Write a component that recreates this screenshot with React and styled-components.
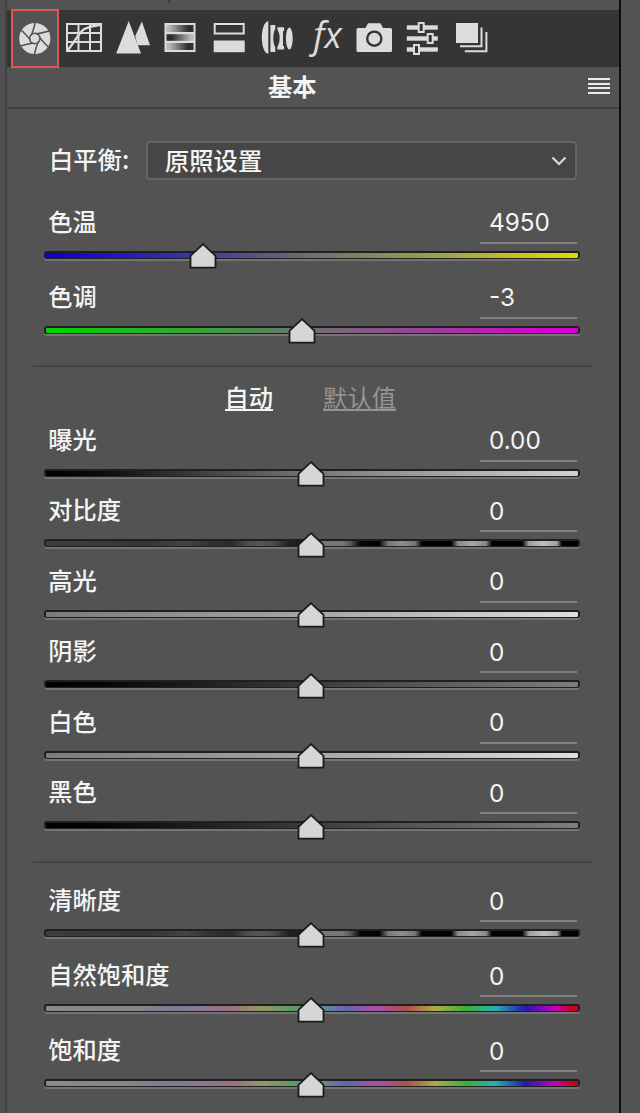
import { useState } from "react";
import styled, { createGlobalStyle } from "styled-components";

const GREY = "#dcdcdc";

const GRADIENTS = {
  temperature: "linear-gradient(90deg, #0d00cf 0%, #3333a8 26%, #6f6f70 50%, #a3a346 75%, #dede00 100%)",
  tint: "linear-gradient(90deg, #00d400 0%, #35a535 28%, #707070 50%, #a832a6 77%, #d600d2 95%)",
  exposure: "linear-gradient(90deg, #000 0%, #0b0b0b 10%, #777 50%, #d2d2d2 100%)",
  light: "linear-gradient(90deg, #7b7b7b 0%, #a5a5a5 50%, #dedede 100%)",
  dark: "linear-gradient(90deg, #000 0%, #050505 10%, #3c3c3c 50%, #7e7e7e 100%)",
  stripes: `linear-gradient(90deg, #3d3d3d 0, #393939 62px, #343434 100px, #3b3b3b 116px, #444 140px,
    #303030 166px, #2b2b2b 186px, #4a4a4a 200px, #575757 214px, #4a4a4a 228px, #222 242px, #1c1c1c 256px,
    #777 270px, #777 296px, #5b5b5b 304px, #080808 314px, #000 333px, #777 342px, #8e8e8e 356px,
    #777 369px, #000 376px, #000 405px, #8a8a8a 412px, #a5a5a5 426px, #8a8a8a 440px, #000 446px,
    #000 476px, #a0a0a0 483px, #c0c0c0 498px, #a0a0a0 511px, #000 516px, #000 100%)`,
  rainbow: `linear-gradient(90deg, #8a8a8a 0, #828888 85px, #7b7b93 125px, #8b7898 155px, #98707a 184px,
    #979763 216px, #5c9a64 245px, #5c8f99 276px, #6464ab 300px, #ab4ea6 331px, #aa5050 360px,
    #aeab45 389px, #37b237 421px, #27b2b1 449px, #2418b8 479px, #c800b9 509px, #c90014 528px, #c90014 100%)`,
};

const TOOLS = [
  { id: "basic", icon: <ApertureIcon /> },
  { id: "curve", icon: <CurveIcon /> },
  { id: "detail", icon: <DetailIcon /> },
  { id: "hsl", icon: <HslIcon /> },
  { id: "split", icon: <SplitIcon /> },
  { id: "lens", icon: <LensIcon /> },
  { id: "effects", icon: <FxIcon /> },
  { id: "camera", icon: <CameraIcon /> },
  { id: "presets", icon: <PresetsIcon /> },
  { id: "snapshots", icon: <SnapshotsIcon /> },
];

const COLOR_SLIDERS = [
  { label: "色温", value: "4950", position: 29.7, track: "temperature" },
  { label: "色调", value: "-3", position: 48.3, track: "tint" },
];

const TONE_SLIDERS = [
  { label: "曝光", value: "0.00", position: 50, track: "exposure" },
  { label: "对比度", value: "0", position: 50, track: "stripes" },
  { label: "高光", value: "0", position: 50, track: "light" },
  { label: "阴影", value: "0", position: 50, track: "dark" },
  { label: "白色", value: "0", position: 50, track: "light" },
  { label: "黑色", value: "0", position: 50, track: "dark" },
];

const PRESENCE_SLIDERS = [
  { label: "清晰度", value: "0", position: 50, track: "stripes" },
  { label: "自然饱和度", value: "0", position: 50, track: "rainbow" },
  { label: "饱和度", value: "0", position: 50, track: "rainbow" },
];

function ApertureIcon() {
  const blades = [0, 60, 120, 180, 240, 300];
  return (
    <Icon>
      <circle cx="23.8" cy="28.5" r="15.6" fill={GREY} />
      <g fill="none" stroke="#535353" strokeWidth="1.5">
        <circle cx="23.8" cy="28.5" r="5.2" />
        {blades.map((angle) => (
          <path
            key={angle}
            d="M20.4 25.2Q22.9 18.5 24.3 12.5"
            transform={`rotate(${angle} 23.8 28.5)`}
          />
        ))}
      </g>
    </Icon>
  );
}

function CurveIcon() {
  return (
    <Icon fill="none" stroke={GREY}>
      <path d="M7 14H41V41H7Z M18.5 14V41 M30 14V41 M7 23H41 M7 32H41" strokeWidth="2" />
      <path d="M7 41C14 33 17 26 22 21C26 16.5 32 17 41 14.5" strokeWidth="2.4" />
    </Icon>
  );
}

function DetailIcon() {
  return (
    <Icon fill={GREY}>
      <path d="M20.7 11L33 43.5H8.2Z" />
      <path d="M33.9 11.5L42 35.2H29.5L27.2 26Z" />
    </Icon>
  );
}

function HslIcon() {
  return (
    <Icon>
      <defs>
        <linearGradient id="fade-out">
          <stop offset="0.1" stopColor="#b9b9b9" />
          <stop offset="0.8" stopColor="#303030" />
        </linearGradient>
        <linearGradient id="fade-in">
          <stop offset="0.2" stopColor="#303030" />
          <stop offset="0.9" stopColor="#b9b9b9" />
        </linearGradient>
      </defs>
      <rect x="8.5" y="13" width="31" height="29" fill={GREY} />
      <rect x="10.5" y="15" width="27" height="7" fill="url(#fade-out)" />
      <rect x="10.5" y="24.2" width="27" height="6.6" fill="url(#fade-in)" />
      <rect x="10.5" y="33" width="27" height="7" fill="url(#fade-out)" />
    </Icon>
  );
}

function SplitIcon() {
  return (
    <Icon>
      <rect x="9.7" y="14" width="29" height="9.5" fill="none" stroke={GREY} strokeWidth="2" />
      <rect x="8.7" y="30.5" width="31" height="11.7" fill={GREY} />
    </Icon>
  );
}

function LensIcon() {
  return (
    <Icon fill={GREY}>
      <path d="M15.3 11V44C11 43 8.8 35.5 8.8 27.5S11 12 15.3 11Z" />
      <path d="M17.4 15H22.3V18.5C19.6 24 19.6 32 22.3 37.5V42H17.4Z" />
      <path d="M24.4 17.3H31.1V21H30V36H31.1V39.6H24.4V37C27.4 31.5 27.4 24.5 24.4 19.5Z" />
      <ellipse cx="36.3" cy="28.5" rx="3.4" ry="10.9" />
    </Icon>
  );
}

function FxIcon() {
  return <FxText>fx</FxText>;
}

function CameraIcon() {
  return (
    <Icon>
      <path
        d="M8 18H15.5L18 13.3H30.5L33 18H40.5Q42 18 42 19.5V40.5Q42 42 40.5 42H8Q6.5 42 6.5 40.5V19.5Q6.5 18 8 18Z"
        fill={GREY}
      />
      <circle cx="24.3" cy="28.7" r="7.1" fill="none" stroke="#353535" strokeWidth="2.4" />
    </Icon>
  );
}

function PresetsIcon() {
  const rows = [
    { y: 17.5, x: 23.2 },
    { y: 28.5, x: 32.2 },
    { y: 39.5, x: 18.5 },
  ];
  return (
    <Icon>
      {rows.map(({ x, y }) => (
        <g key={y}>
          <rect x="8.8" y={y - 2.2} width="31" height="4.4" fill={GREY} />
          <rect x={x - 2.5} y={y - 4.5} width="5" height="9" fill="#353535" stroke={GREY} strokeWidth="2" />
        </g>
      ))}
    </Icon>
  );
}

function SnapshotsIcon() {
  return (
    <Icon>
      <rect x="9" y="13" width="22" height="20" fill={GREY} />
      <path d="M13 36.3H34.5V17.5 M17.8 41.2H39.4V22" fill="none" stroke={GREY} strokeWidth="2" />
    </Icon>
  );
}

function Slider({ label, value, position, track }) {
  return (
    <SliderBlock>
      <SliderHead>
        <Label>{label}</Label>
        <Value>{value}</Value>
      </SliderHead>
      <Track $fill={GRADIENTS[track]}>
        <Thumb style={{ left: `${position}%` }} viewBox="0 0 28 26">
          <path d="M14 1.2L26.5 12.8V24.6H1.5V12.8Z" />
        </Thumb>
      </Track>
    </SliderBlock>
  );
}

function SliderGroup({ sliders, pitch }) {
  return (
    <Group $pitch={pitch}>
      {sliders.map((slider) => (
        <Slider key={slider.label} {...slider} />
      ))}
    </Group>
  );
}

function App() {
  const [active, setActive] = useState("basic");

  return (
    <Window>
      <GlobalStyle />
      <LeftEdge />
      <Panel>
        <TopStrip>
          <Tick />
        </TopStrip>
        <Toolbar>
          {TOOLS.map(({ id, icon }) => (
            <Tool key={id} $active={id === active} onClick={() => setActive(id)}>
              {icon}
            </Tool>
          ))}
        </Toolbar>
        <TitleBar>
          <Title>基本</Title>
          <MenuButton>
            <MenuLine />
            <MenuLine />
            <MenuLine />
            <MenuLine />
          </MenuButton>
        </TitleBar>
        <Content>
          <BalanceRow>
            <Label>白平衡:</Label>
            <Select>
              原照设置
              <Chevron viewBox="0 0 16 10">
                <path d="M1.5 1.5L8 8L14.5 1.5" />
              </Chevron>
            </Select>
          </BalanceRow>
          <SliderGroup sliders={COLOR_SLIDERS} pitch={75} />
          <Divider $top={15} />
          <Actions>
            <Action>自动</Action>
            <Action $disabled>默认值</Action>
          </Actions>
          <SliderGroup sliders={TONE_SLIDERS} pitch={70.5} />
          <Divider $top={19.5} $bottom={16} />
          <SliderGroup sliders={PRESENCE_SLIDERS} pitch={75} />
        </Content>
      </Panel>
      <RightEdge />
    </Window>
  );
}

const GlobalStyle = createGlobalStyle`
  * {
    box-sizing: border-box;
  }
  body {
    margin: 0;
    overflow: hidden;
    background: #535353;
    color: #f4f4f4;
    font-family: "Noto Sans CJK SC", sans-serif;
    font-size: 24.3px;
  }
`;

const Window = styled.div`
  display: flex;
  width: 640px;
  height: 1113px;
  overflow: hidden;
`;

const LeftEdge = styled.div`
  width: 7px;
  background: #4f4f4f;
  border-right: 2px solid #424242;
`;

const RightEdge = styled.div`
  flex: 1;
  background: #535353;
  border-left: 2px solid #0c0c0c;
`;

const Panel = styled.div`
  display: flex;
  flex-direction: column;
  width: 612px;
`;

const TopStrip = styled.div`
  height: 10px;
  flex: none;
  padding-left: 161px;
`;

const Tick = styled.div`
  width: 2px;
  height: 3px;
  background: #3c3c3c;
`;

const Toolbar = styled.div`
  display: flex;
  flex: none;
  height: 57px;
  padding-left: 4px;
  background: #353535;
`;

const Tool = styled.button`
  display: flex;
  align-items: center;
  justify-content: center;
  flex: none;
  width: 48.4px;
  height: ${(props) => (props.$active ? "59px" : "57px")};
  margin-top: ${(props) => (props.$active ? "-1px" : "0")};
  padding: 0;
  border: none;
  background: ${(props) => (props.$active ? "#535353" : "transparent")};
  box-shadow: ${(props) => (props.$active ? "inset 0 0 0 2px #df5552" : "none")};
`;

const Icon = styled.svg.attrs({ viewBox: "0 0 48 57" })`
  display: block;
  flex: none;
  width: 48px;
  height: 57px;
`;

const FxText = styled.span`
  padding: 0 0 8px 4px;
  color: ${GREY};
  font: italic 400 36px/49px "Open Sans", sans-serif;
`;

const TitleBar = styled.div`
  display: grid;
  grid-template-columns: 1fr auto;
  align-items: center;
  flex: none;
  height: 42px;
  padding: 0 9px 2px 0;
  border-bottom: 2px solid #424242;
`;

const Title = styled.div`
  padding: 0 0 1px 261px;
  line-height: 37px;
  font-weight: 700;
`;

const MenuButton = styled.div`
  display: flex;
  flex-direction: column;
  gap: 2.5px;
  width: 22px;
`;

const MenuLine = styled.div`
  height: 2px;
  background: #ededed;
`;

const Content = styled.div`
  padding: 31px 26px 0;
`;

const BalanceRow = styled.div`
  display: flex;
  align-items: center;
  justify-content: space-between;
  height: 40px;
  margin-bottom: 20px;
  padding: 0 16px 0 16px;
`;

const Label = styled.div`
  padding-bottom: 2px;
  font-weight: 500;
  line-height: 36px;
  white-space: nowrap;
`;

const Select = styled.div`
  display: flex;
  align-items: center;
  justify-content: space-between;
  width: 431px;
  height: 39px;
  padding: 0 8px 2px 17px;
  border: 2px solid #656565;
  border-radius: 4px;
  background: #464646;
  font-weight: 500;
`;

const Chevron = styled.svg`
  width: 16px;
  height: 10px;
  margin-top: 3px;
  fill: none;
  stroke: #dedede;
  stroke-width: 2;
`;

const Group = styled.div`
  display: grid;
  grid-auto-rows: ${(props) => props.$pitch}px;
  padding: 0 13px 0 10.5px;
`;

const SliderBlock = styled.div`
  display: flex;
  flex-direction: column;
  gap: 7px;
`;

const SliderHead = styled.div`
  display: flex;
  align-items: center;
  justify-content: space-between;
  height: 43.5px;
  padding: 0 3.5px 0 4.7px;
`;

const Value = styled.div`
  width: 97px;
  height: 43.5px;
  padding-left: 9.5px;
  border-bottom: 2px solid #808080;
  font: 400 24.3px/45px Inter, sans-serif;
`;

const Track = styled.div`
  position: relative;
  height: 8px;
  border: solid #202020;
  border-width: 2px 2px 1px;
  border-radius: 3px;
  background: ${(props) => props.$fill};
  box-shadow: 0 2px 0 #747474;
`;

const Thumb = styled.svg`
  position: absolute;
  top: -9.5px;
  width: 28px;
  height: 26px;
  margin-left: -15px;
  fill: #d6d6d6;
  stroke: #1b1b1b;
  stroke-width: 1.8;
`;

const Divider = styled.div`
  height: 2px;
  margin-top: ${(props) => props.$top}px;
  margin-bottom: ${(props) => props.$bottom || 0}px;
  background: #444;
`;

const Actions = styled.div`
  display: flex;
  gap: 50px;
  height: 51px;
  padding: 13px 0 0 191.5px;
`;

const Action = styled.span`
  height: 31px;
  border-bottom: 2px solid;
  color: ${(props) => (props.$disabled ? "#949494" : "#f4f4f4")};
  font-weight: ${(props) => (props.$disabled ? 400 : 500)};
  line-height: 34px;
`;

export default App;
